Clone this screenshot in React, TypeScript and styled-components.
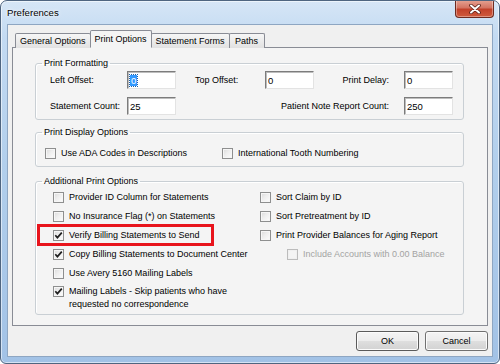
import React from "react";
import styled, { createGlobalStyle, css } from "styled-components";

const Global = createGlobalStyle`
  html, body { margin: 0; padding: 0; background: #ffffff; }
  body { font-family: "Liberation Sans", Arial, sans-serif; }
  * { box-sizing: border-box; }
`;

const Window = styled.div`
  width: 500px;
  height: 364px;
  display: flex;
  flex-direction: column;
  padding: 0 6px 6px 6px;
  border: 1px solid #4f6580;
  border-radius: 7px 7px 6px 6px;
  background: linear-gradient(180deg, #d6e6f6 0%, #c3daf2 10%, #b2cfec 45%, #a2c2e6 100%);
  box-shadow: inset 0 0 0 1px rgba(255, 255, 255, 0.55);
  overflow: hidden;
`;

const TitleBar = styled.div`
  height: 23px;
  display: flex;
  justify-content: space-between;
  align-items: flex-start;
`;

const Title = styled.div`
  font-size: 9.6px;
  color: #000;
  margin-top: 6px;
  text-shadow: 0 0 5px rgba(255, 255, 255, 0.95), 0 0 2px rgba(255, 255, 255, 0.9);
`;

const CloseButton = styled.div`
  width: 39px;
  height: 18px;
  margin-top: -1px;
  margin-right: -1px;
  border: 1px solid #6e2a1f;
  border-top: none;
  border-radius: 0 0 4px 4px;
  background: linear-gradient(180deg, #e6a494 0%, #d47462 45%, #c2412a 55%, #cf5a3c 100%);
  box-shadow: inset 0 0 0 1px rgba(255, 255, 255, 0.35);
  display: flex;
  align-items: center;
  justify-content: center;
`;

const Client = styled.div`
  flex: 1;
  display: flex;
  flex-direction: column;
  background: #f0f0f0;
  border: 1px solid #8ea6c2;
  padding: 6px 4px 0 4px;
`;

const TabStrip = styled.div`
  display: flex;
  align-items: flex-end;
  height: 17px;
  padding-left: 3px;
  position: relative;
  z-index: 1;
  margin-bottom: -1px;
`;

const Tab = styled.div<{ $active?: boolean; $min?: number }>`
  height: 15px;
  padding: 0 4px;
  min-width: ${(p) => p.$min ?? 0}px;
  justify-content: center;
  font-size: 9px;
  color: #000;
  display: flex;
  align-items: center;
  border: 1px solid #898c95;
  border-bottom: none;
  background: linear-gradient(180deg, #f6f6f6 0%, #ececec 50%, #e1e1e1 100%);
  margin-right: -1px;
  border-radius: 2px 2px 0 0;
  ${(p) =>
    p.$active &&
    css`
      height: 18px;
      padding: 0 4px 1px 4px;
      background: #f4f4f4;
      margin: 0 -1px 0 0;
      position: relative;
      z-index: 2;
      border-bottom: 1px solid #f4f4f4;
    `}
`;

const Panel = styled.div`
  flex: 1;
  border: 1px solid #898c95;
  background: #f4f4f4;
  padding: 10px 23px 0 22px;
  display: flex;
  flex-direction: column;
`;

const Group = styled.fieldset<{ $gap?: number }>`
  margin: ${(p) => p.$gap ?? 0}px 0 0 0;
  padding: 0;
  border: 1px solid #c9cfd4;
  border-radius: 3px;
  box-shadow: inset 1px 1px 0 #ffffff;
  min-width: 0;
`;

const Legend = styled.legend`
  font-size: 9px;
  line-height: 11px;
  color: #000;
  padding: 0 2px;
  margin-left: 6px;
`;

const FormatGrid = styled.div`
  display: grid;
  grid-template-columns: 77px 49px 19px 70px 49px 1fr 49px;
  grid-template-rows: 18px 18px;
  row-gap: 8px;
  align-items: center;
  padding: 2px 10px 4px 14px;
`;

const FieldLabel = styled.span<{ $right?: boolean; $col?: string }>`
  font-size: 9px;
  color: #000;
  white-space: nowrap;
  ${(p) => p.$col && css`grid-column: ${p.$col};`}
  ${(p) =>
    p.$right &&
    css`
      text-align: right;
      padding-right: 15px;
    `}
`;

const TextBox = styled.div<{ $col?: string }>`
  height: 18px;
  background: #ffffff;
  border: 1px solid;
  border-color: #7c7c7c #e3e3e3 #e3e3e3 #7c7c7c;
  box-shadow: inset 1px 1px 0 #bdbdbd;
  font-size: 9.5px;
  color: #000;
  display: flex;
  align-items: center;
  padding-left: 2px;
  ${(p) => p.$col && css`grid-column: ${p.$col};`}
`;

const Selected = styled.span`
  background: #3399ff;
  color: #ffffff;
  padding: 0 1px;
  outline: 1px dotted #1c5fa8;
`;

const DisplayRow = styled.div`
  display: flex;
  padding: 6px 0 3px 9px;
`;

const DisplayItem = styled.div<{ $w?: number }>`
  ${(p) => p.$w && css`width: ${p.$w}px;`}
`;

const OptionsBody = styled.div`
  display: flex;
  padding: 1px 0 3px 17px;
`;

const Column = styled.div<{ $w?: number }>`
  display: flex;
  flex-direction: column;
  ${(p) => p.$w && css`width: ${p.$w}px;`}
`;

const CheckRow = styled.label<{ $indent?: number; $multi?: boolean }>`
  display: flex;
  align-items: ${(p) => (p.$multi ? "flex-start" : "center")};
  gap: 5px;
  height: 19px;
  padding-left: ${(p) => p.$indent ?? 0}px;
  position: relative;
  ${(p) =>
    p.$multi &&
    css`
      padding-top: 2px;
      height: auto;
    `}
`;

const CheckText = styled.span<{ $disabled?: boolean }>`
  font-size: 9px;
  line-height: 13px;
  color: ${(p) => (p.$disabled ? "#a3a3a3" : "#000")};
  white-space: nowrap;
`;

const Box = styled.span<{ $disabled?: boolean; $multi?: boolean }>`
  width: 11px;
  height: 11px;
  flex: none;
  border: 1px solid ${(p) => (p.$disabled ? "#bcbcbc" : "#8e8f8f")};
  background: ${(p) =>
    p.$disabled
      ? "#f4f4f4"
      : "linear-gradient(135deg, #dadada 0%, #eeeeee 45%, #fdfdfd 100%)"};
  box-shadow: inset 0 0 0 1px ${(p) => (p.$disabled ? "#f0f0f0" : "#f6f6f6")};
  display: flex;
  align-items: center;
  justify-content: center;
  ${(p) => p.$multi && css`margin-top: 1px;`}
`;

const Highlight = styled.span`
  position: absolute;
  left: -16px;
  top: -2px;
  width: 177px;
  height: 22px;
  border: 3px solid #e8141c;
  pointer-events: none;
`;

const Footer = styled.div`
  height: 30px;
  display: flex;
  justify-content: flex-end;
  align-items: flex-start;
  gap: 6px;
  padding-top: 5px;
`;

const Button = styled.div<{ $default?: boolean }>`
  width: 63px;
  height: 20px;
  border: 1px solid ${(p) => (p.$default ? "#5a5a5a" : "#707070")};
  border-radius: 3px;
  background: linear-gradient(180deg, #f4f4f4 0%, #ececec 48%, #dedede 52%, #d2d2d2 100%);
  box-shadow: inset 0 0 0 1px #fbfbfb;
  font-size: 9px;
  color: #000;
  display: flex;
  align-items: center;
  justify-content: center;
`;

const CheckMark = () => (
  <svg width="9" height="9" viewBox="0 0 9 9">
    <path d="M1.3 4.2 L3.4 6.6 L7.8 1.6" fill="none" stroke="#1f1f1f" strokeWidth="1.7" />
  </svg>
);

const CloseGlyph = () => (
  <svg width="12" height="10" viewBox="0 0 12 10">
    <path d="M2 1.5 L10 8.5 M10 1.5 L2 8.5" stroke="#5a2219" strokeWidth="3.6" strokeLinecap="round" />
    <path d="M2 1.5 L10 8.5 M10 1.5 L2 8.5" stroke="#ffffff" strokeWidth="2" strokeLinecap="round" />
  </svg>
);

type CheckProps = {
  label: React.ReactNode;
  checked?: boolean;
  disabled?: boolean;
  indent?: number;
  highlight?: boolean;
  multi?: boolean;
};

const Check = ({ label, checked, disabled, indent, highlight, multi }: CheckProps) => (
  <CheckRow $indent={indent} $multi={multi}>
    <Box $disabled={disabled} $multi={multi}>{checked && <CheckMark />}</Box>
    <CheckText $disabled={disabled}>{label}</CheckText>
    {highlight && <Highlight />}
  </CheckRow>
);

export default function App() {
  return (
    <>
      <Global />
      <Window>
        <TitleBar>
          <Title>Preferences</Title>
          <CloseButton>
            <CloseGlyph />
          </CloseButton>
        </TitleBar>
        <Client>
          <TabStrip>
            <Tab>General Options</Tab>
            <Tab $active>Print Options</Tab>
            <Tab>Statement Forms</Tab>
            <Tab $min={36}>Paths</Tab>
          </TabStrip>
          <Panel>
            <Group>
              <Legend>Print Formatting</Legend>
              <FormatGrid>
                <FieldLabel>Left Offset:</FieldLabel>
                <TextBox>
                  <Selected>0</Selected>
                </TextBox>
                <FieldLabel $col="4">Top Offset:</FieldLabel>
                <TextBox>0</TextBox>
                <FieldLabel $right>Print Delay:</FieldLabel>
                <TextBox>0</TextBox>
                <FieldLabel>Statement Count:</FieldLabel>
                <TextBox>25</TextBox>
                <FieldLabel $right $col="3 / 7">Patient Note Report Count:</FieldLabel>
                <TextBox $col="7">250</TextBox>
              </FormatGrid>
            </Group>
            <Group $gap={7}>
              <Legend>Print Display Options</Legend>
              <DisplayRow>
                <DisplayItem $w={177}>
                  <Check label="Use ADA Codes in Descriptions" />
                </DisplayItem>
                <DisplayItem>
                  <Check label="International Tooth Numbering" />
                </DisplayItem>
              </DisplayRow>
            </Group>
            <Group $gap={9}>
              <Legend>Additional Print Options</Legend>
              <OptionsBody>
                <Column $w={207}>
                  <Check label="Provider ID Column for Statements" />
                  <Check label="No Insurance Flag (*) on Statements" />
                  <Check label="Verify Billing Statements to Send" checked highlight />
                  <Check label="Copy Billing Statements to Document Center" checked />
                  <Check label="Use Avery 5160 Mailing Labels" />
                  <Check
                    multi
                    checked
                    label={
                      <>
                        Mailing Labels - Skip patients who have
                        <br />
                        requested no correspondence
                      </>
                    }
                  />
                </Column>
                <Column>
                  <Check label="Sort Claim by ID" />
                  <Check label="Sort Pretreatment by ID" />
                  <Check label="Print Provider Balances for Aging Report" />
                  <Check label="Include Accounts with 0.00 Balance" disabled indent={27} />
                </Column>
              </OptionsBody>
            </Group>
          </Panel>
          <Footer>
            <Button $default>OK</Button>
            <Button>Cancel</Button>
          </Footer>
        </Client>
      </Window>
    </>
  );
}
